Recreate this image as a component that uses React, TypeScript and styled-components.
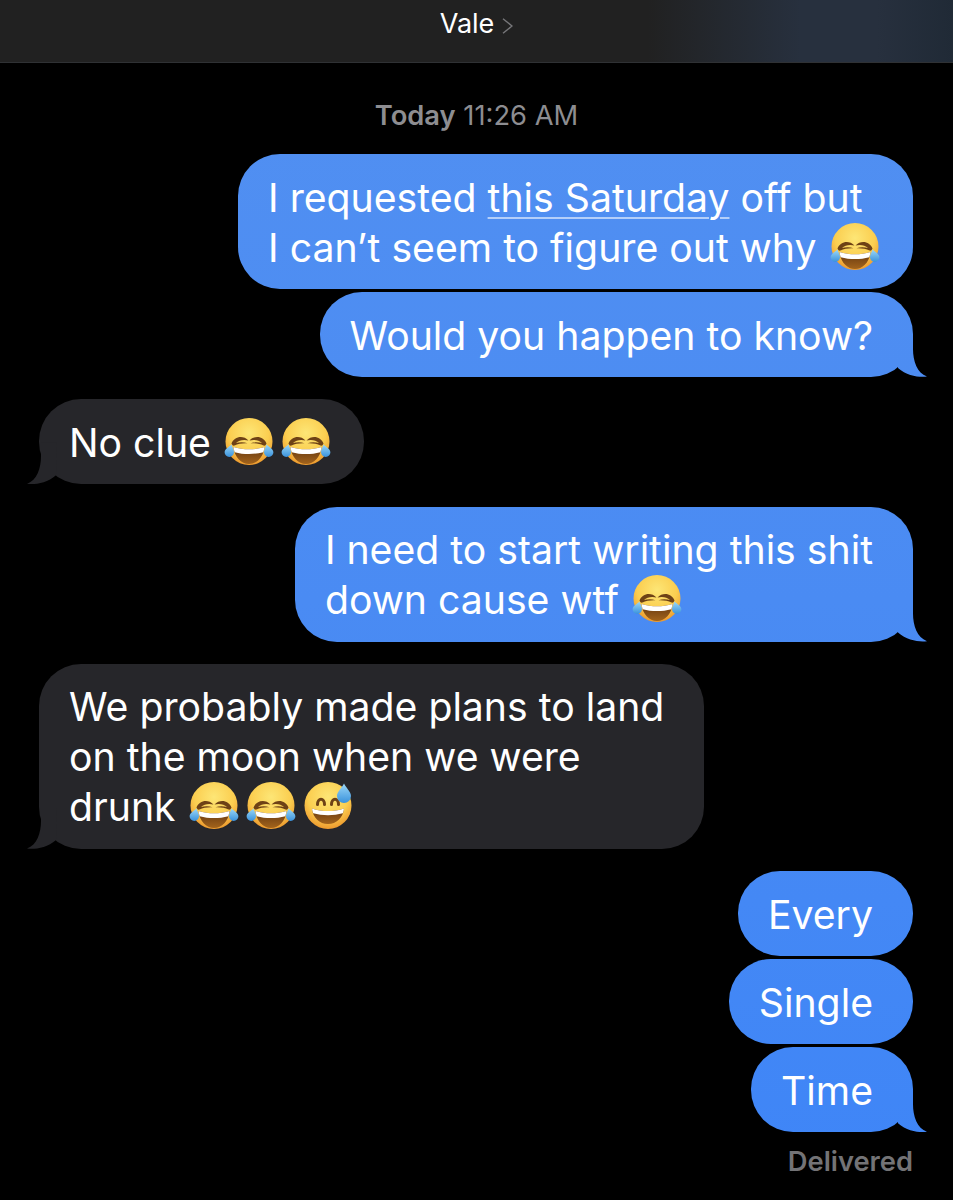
import React, { useId } from 'react';
import styled, { createGlobalStyle } from 'styled-components';

const GlobalStyle = createGlobalStyle`
  html, body {
    margin: 0;
    padding: 0;
    background: #000;
    overflow: hidden;
  }
  * {
    box-sizing: border-box;
  }
`;

type Side = 'sent' | 'received';

const SENT_BLUE = 'linear-gradient(180deg, #5290f1 0%, #4a8bf3 50%, #3e85f7 100%) fixed';
const RECEIVED_GREY = '#26262a';

const FaceDefs: React.FC<{ id: string }> = ({ id }) => (
  <defs>
    <radialGradient id={`${id}face`} cx="50%" cy="32%" r="70%">
      <stop offset="0%" stopColor="#fde676" />
      <stop offset="60%" stopColor="#fbce50" />
      <stop offset="100%" stopColor="#ec952b" />
    </radialGradient>
    <linearGradient id={`${id}drop`} x1="0" y1="0" x2="0" y2="1">
      <stop offset="0%" stopColor="#9bd8f8" />
      <stop offset="100%" stopColor="#3a92dc" />
    </linearGradient>
    <linearGradient id={`${id}mouth`} x1="0" y1="0" x2="0" y2="1">
      <stop offset="0%" stopColor="#633610" />
      <stop offset="100%" stopColor="#a3641c" />
    </linearGradient>
  </defs>
);

const LaughCry: React.FC = () => {
  const id = useId();
  return (
    <Emoji viewBox="0 0 50 50" aria-hidden="true">
      <FaceDefs id={id} />
      <circle cx="25" cy="24.500" r="23.500" fill={`url(#${id}face)`} />
      <path d="M7.500 26.500c2.500-7 11.500-9 17-3-5-1.200-9.500-.3-12.500 2.600 3.500-1.200 8-1.300 11.500.2-5-.2-9.500.4-13 2.200-1.500.6-2.500-.6-3-2z" fill="#6e4216" />
      <path d="M42.500 26.500c-2.500-7-11.500-9-17-3 5-1.200 9.500-.3 12.500 2.600-3.500-1.200-8-1.300-11.500.2 5-.2 9.500.4 13 2.200 1.500.6 2.500-.6 3-2z" fill="#6e4216" />
      <path d="M9.500 30c5 1.700 10.500 2.300 15.500 2.300S35.500 31.700 40.500 30c-1 10-7.500 17-15.500 17S10.500 40 9.500 30z" fill={`url(#${id}mouth)`} />
      <path d="M9.500 30c5 1.700 10.500 2.300 15.500 2.300S35.500 31.700 40.500 30c-.2 1.900-.6 3.500-1.200 5.200-4.600 1.300-9.300 1.800-14.300 1.800s-9.700-.5-14.300-1.800C10.100 33.500 9.700 31.900 9.500 30z" fill="#fff" />
      <path d="M7.500 27.500c.6 3 2.500 4.500 2.500 7.800a4.700 4.700 0 0 1-9.400 0c0-3.200 4.400-5.300 6.900-7.800z" fill={`url(#${id}drop)`} />
      <path d="M42.500 27.500c-.6 3-2.500 4.500-2.500 7.800a4.700 4.700 0 0 0 9.400 0c0-3.200-4.400-5.300-6.900-7.800z" fill={`url(#${id}drop)`} />
    </Emoji>
  );
};

const SweatSmile: React.FC = () => {
  const id = useId();
  return (
    <Emoji viewBox="0 0 50 50" aria-hidden="true">
      <FaceDefs id={id} />
      <circle cx="25" cy="24.500" r="23.500" fill={`url(#${id}face)`} />
      <path d="M14.500 23.500c0-7 7-7 7 0M28.500 23.500c0-7 7-7 7 0" fill="none" stroke="#6e4216" strokeWidth="3" strokeLinecap="round" />
      <path d="M9 27.500c5 1.900 10.500 2.600 16 2.600s11-.7 16-2.600C40 37 33.500 43 25 43S10 37 9 27.500z" fill={`url(#${id}mouth)`} />
      <path d="M9 27.500c5 1.900 10.500 2.600 16 2.600s11-.7 16-2.600c-.2 1.800-.6 3.300-1.200 4.800-4.700 1.300-9.700 1.900-14.800 1.900s-10.100-.6-14.800-1.900C9.600 30.800 9.200 29.300 9 27.500z" fill="#fff" />
      <path d="M41 2.500c1.800 4.200 7 8 7 12.500a7 7 0 0 1-14 0c0-4.500 5.200-8.300 7-12.500z" fill={`url(#${id}drop)`} />
    </Emoji>
  );
};

const Bubble: React.FC<{ side: Side; tail?: boolean; children: React.ReactNode }> = ({ side, tail, children }) => (
  <BubbleBody side={side}>
    {children}
    {tail && <Tail side={side} />}
  </BubbleBody>
);

const App: React.FC = () => (
  <Screen>
    <GlobalStyle />
    <Header>
      <ContactName>Vale</ContactName>
      <Chevron viewBox="0 0 11 16" aria-hidden="true">
        <path d="M1 .7l9 7.300-9 7.300" fill="none" stroke="#77777a" strokeWidth="1.400" />
      </Chevron>
    </Header>
    <Timestamp>
      <b>Today</b> 11:26 AM
    </Timestamp>
    <Thread>
      <Group>
        <Bubble side="sent">
          I requested <DataLink>this Saturday</DataLink> off but
          <br />I can’t seem to figure out why <LaughCry />
        </Bubble>
        <Bubble side="sent" tail>
          Would you happen to know?
        </Bubble>
      </Group>
      <Group>
        <Bubble side="received" tail>
          No clue <LaughCry />
          <LaughCry />
        </Bubble>
      </Group>
      <Group>
        <Bubble side="sent" tail>
          I need to start writing this shit
          <br />
          down cause wtf <LaughCry />
        </Bubble>
      </Group>
      <Group>
        <Bubble side="received" tail>
          We probably made plans to land
          <br />
          on the moon when we were
          <br />
          drunk <LaughCry />
          <LaughCry />
          <SweatSmile />
        </Bubble>
      </Group>
      <Group>
        <Bubble side="sent">Every</Bubble>
        <Bubble side="sent">Single</Bubble>
        <Bubble side="sent" tail>
          Time
        </Bubble>
      </Group>
    </Thread>
    <Receipt>Delivered</Receipt>
  </Screen>
);

const Screen = styled.div`
  width: 953px;
  height: 1200px;
  background: #000;
  font-family: Inter, 'Liberation Sans', sans-serif;
  overflow: hidden;
`;

const Header = styled.header`
  height: 63px;
  padding-bottom: 15px;
  display: flex;
  align-items: center;
  justify-content: center;
  gap: 8px;
  background: linear-gradient(90deg, #212121 0%, #212121 68%, #27303e 84%, #27303e 92%, #202a36 100%);
  border-bottom: 1px solid #2f3134;
`;

const ContactName = styled.span`
  color: #fff;
  font-size: 27px;
  line-height: 30px;
`;

const Chevron = styled.svg`
  width: 11px;
  height: 16px;
  margin-top: 4px;
`;

const Timestamp = styled.div`
  margin-top: 38px;
  text-align: center;
  color: #8d8d91;
  font-size: 27.300px;
  line-height: 30px;

  b {
    font-weight: 600;
  }
`;

const Thread = styled.main`
  margin-top: 23px;
  padding: 0 40px 0 39px;
  display: flex;
  flex-direction: column;
  gap: 22.300px;
`;

const Group = styled.section`
  display: flex;
  flex-direction: column;
  gap: 3px;
`;

const BubbleBody = styled.div<{ side: Side }>`
  position: relative;
  align-self: ${({ side }) => (side === 'sent' ? 'flex-end' : 'flex-start')};
  padding: 18.500px 40px 16.500px 30px;
  border-radius: 42px;
  color: #fff;
  font-size: 39.200px;
  line-height: 50px;
  white-space: nowrap;
  background: ${({ side }) => (side === 'sent' ? SENT_BLUE : RECEIVED_GREY)};
`;

const Tail = styled.span<{ side: Side }>`
  position: absolute;
  bottom: 0;
  width: 30px;
  height: 42px;
  clip-path: path('M0 0H16V14C16 26 20 38 30 41.600C22 42.500 10 41 1 33z');
  background: ${({ side }) => (side === 'sent' ? SENT_BLUE : RECEIVED_GREY)};
  ${({ side }) => (side === 'sent' ? 'right: -14px;' : 'left: -12px; transform: scaleX(-1);')}
`;

const DataLink = styled.span`
  text-decoration: underline;
  text-decoration-thickness: 2px;
  text-underline-offset: 5px;
  text-decoration-color: #b4cffa;
`;

const Emoji = styled.svg`
  display: inline-block;
  width: 50px;
  height: 50px;
  margin: -10px -7px -10px 2.500px;
  vertical-align: 0;

  & + & {
    margin-left: 14px;
  }
`;

const Receipt = styled.div`
  margin-top: 15px;
  padding-right: 40px;
  text-align: right;
  color: #737376;
  font-size: 27.300px;
  font-weight: 600;
  line-height: 30px;
`;

export default App;
